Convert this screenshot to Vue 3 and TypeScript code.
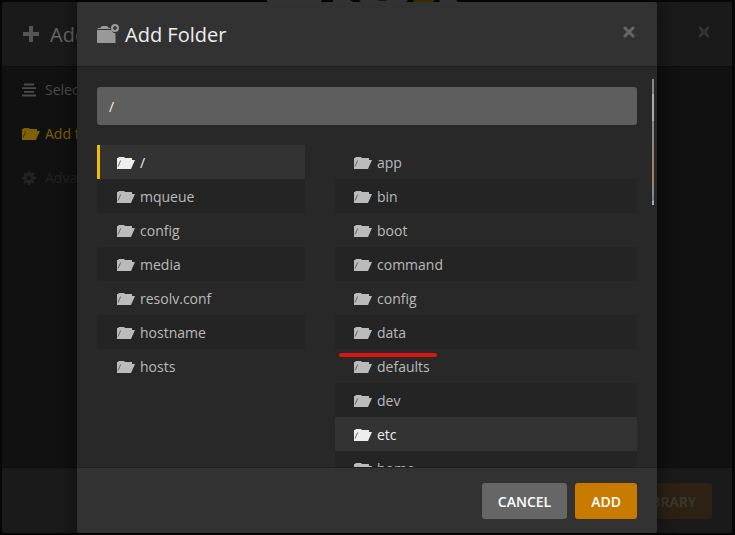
<script setup lang="ts">
import { ref } from 'vue'

const path = ref('/')
const roots = ['/', 'mqueue', 'config', 'media', 'resolv.conf', 'hostname', 'hosts']
const folders = ['app', 'bin', 'boot', 'command', 'config', 'data', 'defaults', 'dev', 'etc', 'home', 'init', 'lib']
const activeRoot = ref('/')
const activeFolder = ref('etc')
</script>

<template>
  <div class="stage">
    <svg class="brand" viewBox="0 0 200 2" aria-hidden="true">
      <path fill="#333" d="M5 0H60L59 2H5Z M71 0H88L91 2H71Z M97 0H146L144 2H99Z M177 0H194L196 2H178Z" />
      <path fill="#3a2b07" d="M152 0H173L171 2H151Z" />
      <path fill="#151515" d="M116 0H125L123 1H118Z" />
    </svg>
    <section class="dialog library" aria-label="Add Library">
      <header class="head">
        <svg class="plus" viewBox="0 0 16 16" aria-hidden="true"><path d="M6 0h4v6h6v4h-6v6H6v-6H0V6h6z" /></svg>
        <h2>Add Library</h2>
        <button class="close" aria-label="Close library dialog">
          <svg viewBox="0 0 12 12"><path d="M2 2L10 10M10 2L2 10" /></svg>
        </button>
      </header>
      <nav class="steps">
        <a class="step" href="#type">
          <svg viewBox="0 0 18 14" aria-hidden="true"><path d="M2 .6h10v1.900H2zM0 4.200h14v1.900H0zM2 7.900h10v1.900H2zM0 11.500h14v1.900H0z" /></svg>
          Select type
        </a>
        <a class="step current" href="#folders">
          <svg viewBox="0 0 18 14" aria-hidden="true"><path d="M0 2H1L2 1H7L8 2H15V4H18L14 13H0Z" /><path class="fold" d="M3.700 4.500L1 10.500" /></svg>
          Add folders
        </a>
        <a class="step off" href="#advanced">
          <svg viewBox="0 0 18 14" aria-hidden="true">
            <path fill-rule="evenodd" d="M6 0h2l.5 2 1 .4L11.300 1.300 12.700 2.700 11.600 4.500 12 5.500 14 6v2l-2 .5-.4 1 1.100 1.800-1.400 1.400-1.800-1.100-1 .4L8 14H6l-.5-2-1-.4-1.800 1.100-1.400-1.400L2.400 9.500 2 8.500 0 8V6l2-.5.4-1L1.300 2.700 2.700 1.300 4.500 2.400 5.500 2zM7 5a2 2 0 1 0 0 4a2 2 0 1 0 0-4z" />
          </svg>
          Advanced
        </a>
      </nav>
      <footer class="foot"><button class="btn add">Add Library</button></footer>
    </section>

    <section class="dialog folder" role="dialog" aria-label="Add Folder">
      <header class="head">
        <svg class="new-folder" viewBox="0 0 22 20" aria-hidden="true">
          <path d="M0 5L1 4H3L5 2H10L12 4H13L14 5Z M0 6H14.500L16 8.500L18.500 9.500V19H0Z" />
          <path fill-rule="evenodd" d="M18 0a4 4 0 1 0 0 8a4 4 0 1 0 0-8zM17.200 2h1.600v1.200H20v1.600h-1.200V6h-1.600V4.800H16V3.200h1.200z" />
        </svg>
        <h2>Add Folder</h2>
        <button class="close" aria-label="Close">
          <svg viewBox="0 0 12 12"><path d="M2 2L10 10M10 2L2 10" /></svg>
        </button>
      </header>
      <div class="body">
        <input v-model="path" class="path" type="text" aria-label="Folder path" />
        <div class="lists">
          <div class="list roots">
            <button v-for="name in roots" :key="name" class="row" :class="{ active: name === activeRoot }" @click="activeRoot = name">
              <svg viewBox="0 0 18 14" aria-hidden="true"><path d="M0 2H1L2 1H7L8 2H15V4H18L14 13H0Z" /><path class="fold" d="M3.700 4.500L1 10.500" /></svg>
              {{ name }}
            </button>
          </div>
          <div class="list children">
            <button v-for="name in folders" :key="name" class="row" :class="{ active: name === activeFolder }" @click="activeFolder = name">
              <svg viewBox="0 0 18 14" aria-hidden="true"><path d="M0 2H1L2 1H7L8 2H15V4H18L14 13H0Z" /><path class="fold" d="M3.700 4.500L1 10.500" /></svg>
              {{ name }}
            </button>
            <span class="underline"></span>
          </div>
        </div>
        <span class="thumb"></span>
      </div>
      <footer class="foot">
        <button class="btn">Cancel</button>
        <button class="btn add">Add</button>
      </footer>
    </section>
  </div>
</template>

<style>
body {
  background: #070707;
}
</style>

<style scoped>
.stage {
  position: relative;
  display: grid;
  grid-template-rows: minmax(0, 1fr);
  height: 100vh;
  box-sizing: border-box;
  padding: 2px 3px 2px 2px;
  overflow: hidden;
  font: 14px/20px "Open Sans", "Noto Sans", sans-serif;
  color: #bbb;
}
.brand {
  position: absolute;
  z-index: 1;
  top: 0;
  left: 262px;
  width: 200px;
  height: 2px;
}
.dialog {
  grid-area: 1 / 1;
  position: relative;
  display: grid;
  grid-template-rows: 64px minmax(0, 1fr) 65px;
  min-width: 0;
  border-radius: 3px;
  overflow: hidden;
}
.library {
  background: #111;
}
.folder {
  justify-self: center;
  width: 100%;
  max-width: 580px;
  background: #282828;
  box-shadow: 0 0 18px rgba(0, 0, 0, 0.6);
}
.head,
.foot {
  display: flex;
  align-items: center;
  padding: 0 20px;
  background: #323232;
}
.library .head,
.library .foot {
  background: #1a1a1a;
}
.head h2 {
  margin: 0 0 0 6px;
  padding-top: 2px;
  font-size: 20px;
  line-height: 28px;
  font-weight: 400;
  color: #eee;
}
.library h2 {
  margin-left: 11px;
  color: #666;
}
.plus {
  width: 16px;
  height: 16px;
  margin-left: 1px;
  fill: #555;
}
.new-folder {
  width: 22px;
  height: 20px;
  fill: #999;
}
.close {
  width: 16px;
  height: 16px;
  margin: 0 0 4px auto;
  padding: 2px;
  border: 0;
  background: none;
  color: #666;
}
.library .close {
  color: #333;
}
.close svg {
  display: block;
  width: 12px;
  height: 12px;
  fill: none;
  stroke: currentColor;
  stroke-width: 3;
  stroke-linecap: round;
}
.steps {
  display: flex;
  flex-direction: column;
  border: solid #0d0d0d;
  border-width: 1px 0;
}
.step {
  display: flex;
  align-items: center;
  gap: 5px;
  box-sizing: border-box;
  height: 44px;
  padding: 2px 0 0 20px;
  color: #4b4b4b;
  text-decoration: none;
}
.step svg {
  width: 18px;
  height: 14px;
  fill: currentColor;
}
.step.current {
  color: #806000;
}
.step.off {
  color: #222;
}
.body {
  position: relative;
  min-height: 0;
  padding: 20px;
  border: solid #202020;
  border-width: 1px 0;
  overflow: hidden;
}
.path {
  display: block;
  box-sizing: border-box;
  width: 100%;
  height: 38px;
  padding: 0 12px;
  border: 0;
  border-radius: 3px;
  background: #5e5e5e;
  color: #eee;
  font: inherit;
}
.lists {
  display: grid;
  grid-template-columns: 208px minmax(0, 1fr);
  align-items: start;
  gap: 30px;
  margin-top: 20px;
}
.list {
  position: relative;
}
.row {
  display: flex;
  align-items: center;
  gap: 5px;
  box-sizing: border-box;
  width: 100%;
  height: 34px;
  padding: 2px 20px 0;
  border: 0;
  background: transparent;
  color: #bbb;
  font: inherit;
  text-align: left;
}
.children .row {
  padding-left: 19px;
}
.row:nth-child(even) {
  background: #242424;
}
.row.active {
  background: #333;
  color: #eee;
}
.roots .row.active {
  border-left: 3px solid #f4bc00;
  padding-left: 17px;
}
.row svg {
  width: 18px;
  height: 14px;
  fill: currentColor;
}
.fold {
  stroke: #666;
  fill: none;
}
.step .fold {
  stroke: #3a2c05;
}
.underline {
  position: absolute;
  top: 208px;
  left: 4px;
  width: 98px;
  height: 4px;
  border-radius: 2px;
  background: #dc1414;
}
.thumb {
  position: absolute;
  top: 12px;
  right: 3px;
  width: 2px;
  height: 126px;
  background: linear-gradient(#888 0 12%, #aaa 12% 33%, #888 33% 52%, #978567 55% 84%, #888 86% 91%, #718299 93% 96%, #aaa 97%);
}
.foot {
  justify-content: flex-end;
  gap: 8px;
}
.btn {
  height: 36px;
  padding: 2px 16px 0;
  border: 0;
  border-radius: 3px;
  background: #666;
  color: #fff;
  font: 600 14px/20px "Open Sans", "Noto Sans", sans-serif;
  text-transform: uppercase;
}
.btn.add {
  background: #c87b00;
}
.library .btn.add {
  background: #2d2114;
  color: #3d3932;
}
</style>
